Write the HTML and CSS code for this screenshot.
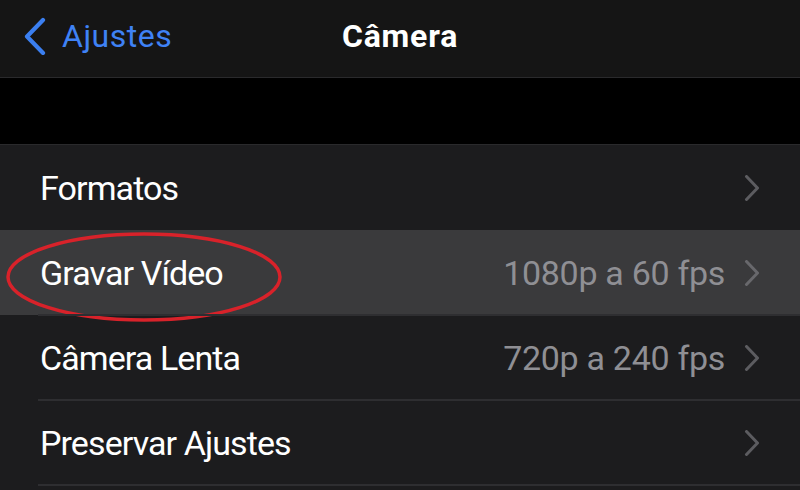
FILE: index.html
```html
<!DOCTYPE html>
<html lang="pt">
<head>
<meta charset="utf-8">
<link rel="stylesheet" href="styles.css">
</head>
<body>
<div class="screen">
  <header class="nav">
    <div class="back">
      <svg class="back-icon" width="24" height="38" viewBox="0 0 24 38"><path d="M20 3 L4 19.5 L20 36" fill="none" stroke="#3b7ff0" stroke-width="4.2" stroke-linecap="round" stroke-linejoin="round"/></svg>
      <span class="back-label">Ajustes</span>
    </div>
    <h1 class="title">Câmera</h1>
    <div></div>
  </header>
  <div class="gap"></div>
  <ul class="list">
    <li class="row">
      <span class="label">Formatos</span>
      <span class="value"></span>
      <svg class="chev" width="16" height="26" viewBox="0 0 16 26"><path d="M2.5 1.5 L13.5 13 L2.5 24.5" fill="none" stroke="#5c5c60" stroke-width="3" stroke-linecap="round" stroke-linejoin="round"/></svg>
    </li>
    <li class="row selected">
      <span class="label">Gravar Vídeo</span>
      <span class="value">1080p a 60 fps</span>
      <svg class="chev" width="16" height="26" viewBox="0 0 16 26"><path d="M2.5 1.5 L13.5 13 L2.5 24.5" fill="none" stroke="#68686c" stroke-width="3" stroke-linecap="round" stroke-linejoin="round"/></svg>
      <svg class="circle" width="280" height="94" viewBox="0 0 280 94"><ellipse cx="139" cy="46" rx="136" ry="43" fill="none" stroke="#d8222a" stroke-width="3.5"/></svg>
    </li>
    <li class="row sep">
      <span class="label">Câmera Lenta</span>
      <span class="value">720p a 240 fps</span>
      <svg class="chev" width="16" height="26" viewBox="0 0 16 26"><path d="M2.5 1.5 L13.5 13 L2.5 24.5" fill="none" stroke="#5c5c60" stroke-width="3" stroke-linecap="round" stroke-linejoin="round"/></svg>
    </li>
    <li class="row sep">
      <span class="label">Preservar Ajustes</span>
      <span class="value"></span>
      <svg class="chev" width="16" height="26" viewBox="0 0 16 26"><path d="M2.5 1.5 L13.5 13 L2.5 24.5" fill="none" stroke="#5c5c60" stroke-width="3" stroke-linecap="round" stroke-linejoin="round"/></svg>
    </li>
    <li class="row sep tail"></li>
  </ul>
</div>
</body>
</html>
```
FILE: styles.css
```css
* { box-sizing: border-box; }
html, body { margin: 0; padding: 0; background: #000; }
body { font-family: Roboto, "Liberation Sans", sans-serif; }
.screen { width: 800px; height: 490px; overflow: hidden; background: #000; }

.nav {
  height: 78px;
  background: #151515;
  border-bottom: 1px solid #2a2a2c;
  display: grid;
  grid-template-columns: 1fr auto 1fr;
  align-items: center;
}
.back { display: flex; align-items: center; padding-left: 23px; gap: 15px; margin-top: -5px; }
.back-icon { display: block; }
.back-label { color: #3f82f5; font-size: 32px; letter-spacing: 0.5px; }
.title { margin: -5px 0 0 0; color: #fff; font-size: 32px; font-weight: 700; letter-spacing: 0.8px; }

.gap { height: 67px; background: #000; border-bottom: 1px solid #2a2a2c; }

.list { list-style: none; margin: 0; padding: 0; background: #1c1c1e; }
.row {
  position: relative;
  height: 85px;
  display: flex;
  align-items: center;
  padding: 0 40px 0 40px;
  color: #fff;
}
.row.sep::before {
  content: "";
  position: absolute;
  left: 38px; right: 0; top: -1px;
  height: 2px;
  background: #2e2e31;
}
.row.tail { height: 6px; }
.selected { background: #3a3a3c; }
.label { font-size: 34px; letter-spacing: -0.9px; flex: 1; }
.value { font-size: 34px; letter-spacing: -0.3px; color: #8f8f94; margin-right: 19px; }
.chev { display: block; }
.circle { position: absolute; left: 5px; top: 1px; }
```
